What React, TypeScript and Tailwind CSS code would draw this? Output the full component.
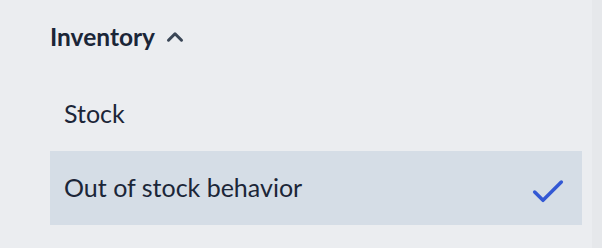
import { Check, ChevronUp } from "lucide-react";

const items = [
  { label: "Stock", selected: false },
  { label: "Out of stock behavior", selected: true },
];

const App = () => {
  return (
    <div className="flex h-[248px] w-[602px] bg-[#ebedf0] font-['Lato',sans-serif] text-[#1b2638]">
      <div className="flex w-[592px] flex-col pl-[50px] pr-[10px] pt-[20px]">
        <button className="flex h-[34px] items-center gap-[7px] text-[24.5px] font-bold">
          Inventory
          <ChevronUp className="h-[26px] w-[26px] text-[#3a4656]" strokeWidth={2.8} />
        </button>
        <ul className="mt-[23px] flex flex-col">
          {items.map((item) => (
            <li
              key={item.label}
              className={`flex h-[74px] items-center justify-between pl-[14px] pr-[14px] text-[25px] ${
                item.selected ? "bg-[#d5dde6]" : ""
              }`}
            >
              {item.label}
              {item.selected && (
                <Check className="mt-[8px] h-[40px] w-[40px] text-[#3358d4]" strokeWidth={2.1} />
              )}
            </li>
          ))}
        </ul>
      </div>
      <div className="w-[10px] bg-[#e6e8eb]" />
    </div>
  );
};

export default App;
